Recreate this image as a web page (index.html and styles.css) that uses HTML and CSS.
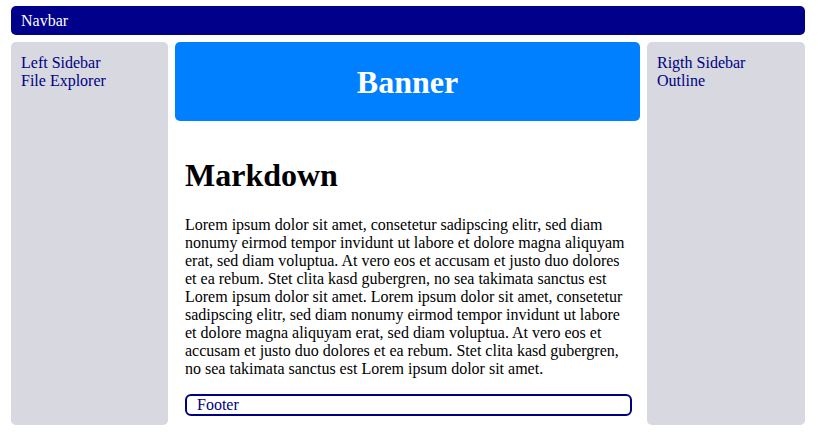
FILE: index.html
```html
<!DOCTYPE html>
<html>
<head>
<meta charset="utf-8">
<link rel="stylesheet" href="styles.css">
</head>
<body>
<div class="page">
  <div class="navbar">Navbar</div>
  <div class="columns">
    <div class="sidebar">Left Sidebar<br>File Explorer</div>
    <div class="main">
      <div class="banner">Banner</div>
      <div class="content">
        <h1 class="title">Markdown</h1>
        <p class="text">Lorem ipsum dolor sit amet, consetetur sadipscing elitr, sed diam nonumy eirmod tempor invidunt ut labore et dolore magna aliquyam erat, sed diam voluptua. At vero eos et accusam et justo duo dolores et ea rebum. Stet clita kasd gubergren, no sea takimata sanctus est Lorem ipsum dolor sit amet. Lorem ipsum dolor sit amet, consetetur sadipscing elitr, sed diam nonumy eirmod tempor invidunt ut labore et dolore magna aliquyam erat, sed diam voluptua. At vero eos et accusam et justo duo dolores et ea rebum. Stet clita kasd gubergren, no sea takimata sanctus est Lorem ipsum dolor sit amet.</p>
        <div class="footer">Footer</div>
      </div>
    </div>
    <div class="sidebar">Rigth Sidebar<br>Outline</div>
  </div>
</div>
</body>
</html>
```
FILE: styles.css
```css
html, body {
  margin: 0;
  padding: 0;
  height: 100%;
  background: #ffffff;
  font-family: "Liberation Serif", "Times New Roman", serif;
  font-size: 16px;
}
.page {
  box-sizing: border-box;
  height: 100vh;
  padding: 6px 13px 8px 11px;
  display: flex;
  flex-direction: column;
  gap: 7px;
}
.navbar {
  height: 29px;
  flex: none;
  box-sizing: border-box;
  background: #00008b;
  color: #ffffff;
  border-radius: 5px;
  padding: 0 10px;
  display: flex;
  align-items: center;
}
.columns {
  flex: 1;
  min-height: 0;
  display: grid;
  grid-template-columns: 157px 1fr 158px;
  gap: 7px;
}
.sidebar {
  background: #d7d8e0;
  color: #000080;
  border-radius: 5px;
  padding: 12px 10px 10px 10px;
}
.main {
  display: flex;
  flex-direction: column;
  min-height: 0;
}
.banner {
  height: 79px;
  flex: none;
  background: #0080ff;
  color: #ffffff;
  border-radius: 5px;
  display: flex;
  align-items: center;
  justify-content: center;
  font-weight: bold;
  font-size: 32px;
  padding-top: 2px;
  box-sizing: border-box;
}
.content {
  flex: 1;
  display: flex;
  flex-direction: column;
  padding: 15px 10px 9px 10px;
  color: #000000;
}
.title {
  font-size: 32px;
  font-weight: bold;
  margin: 21px 0 22px 0;
}
.text {
  margin: 0;
}
.footer {
  margin-top: auto;
  margin-right: -2px;
  border: 2px solid #000080;
  border-radius: 6px;
  color: #000080;
  padding: 0 10px;
  line-height: 18px;
}
```
